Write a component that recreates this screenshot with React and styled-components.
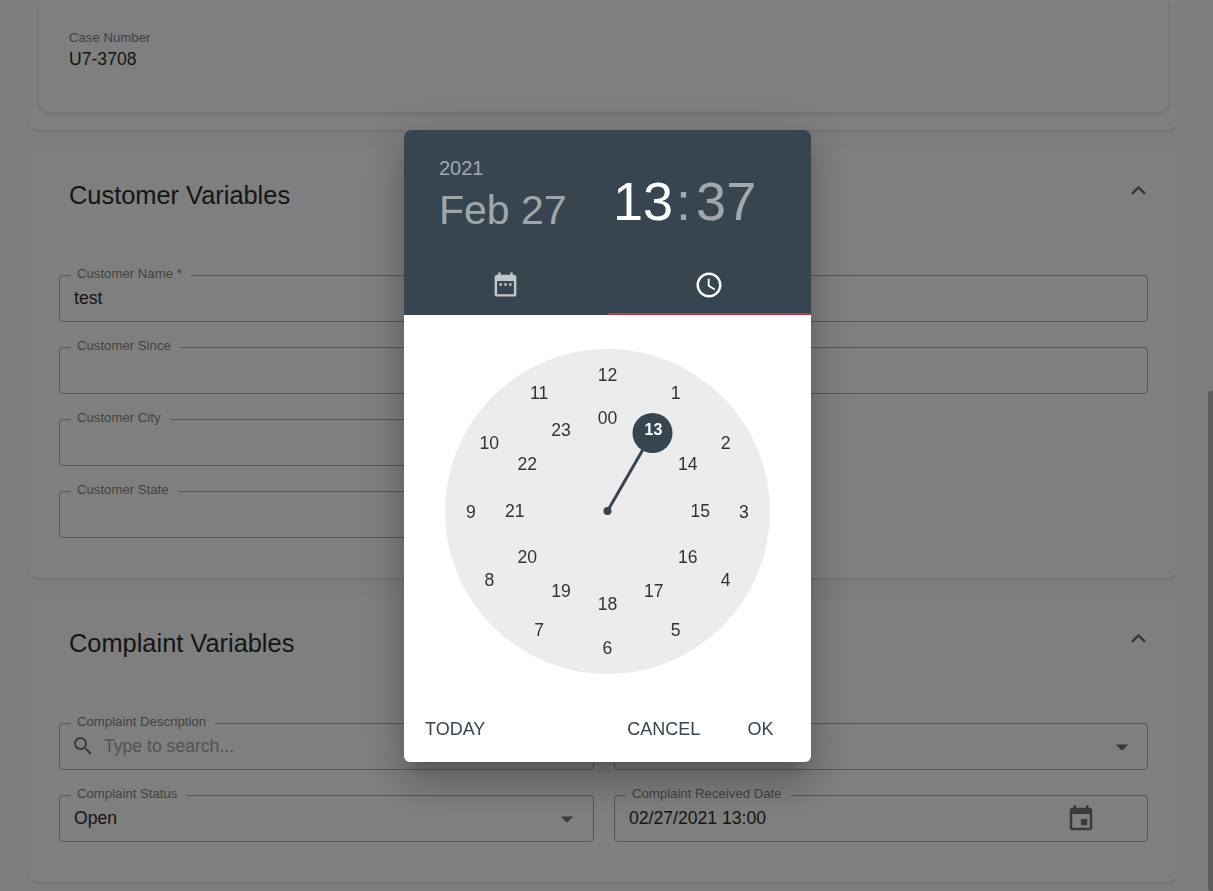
import React from 'react';
import styled, { createGlobalStyle } from 'styled-components';

const GlobalStyle = createGlobalStyle`
  html, body {
    margin: 0;
    height: 100%;
    overflow: hidden;
    background: #fafafa;
  }
  body {
    font-family: "Liberation Sans", Arial, sans-serif;
    color: #2c2c2c;
  }
`;

const ICONS = {
  chevron: 'M12 8l-6 6 1.41 1.41L12 10.83l4.59 4.58L18 14z',
  caret: 'M7 10l5 5 5-5z',
  search: 'M15.5 14h-.79l-.28-.27C15.41 12.59 16 11.11 16 9.5 16 5.91 13.09 3 9.5 3S3 5.91 3 9.5 5.91 16 9.5 16c1.61 0 3.09-.59 4.23-1.57l.27.28v.79l5 4.99L20.49 19l-4.99-5zm-6 0C7.01 14 5 11.99 5 9.5S7.01 5 9.5 5 14 7.01 14 9.5 11.99 14 9.5 14z',
  event: 'M17 12h-5v5h5v-5zM16 1v2H8V1H6v2H5c-1.11 0-1.99.9-1.99 2L3 19c0 1.1.89 2 2 2h14c1.1 0 2-.9 2-2V5c0-1.1-.9-2-2-2h-1V1h-2zm3 18H5V8h14v11z',
  dateRange: 'M9 11H7v2h2v-2zm4 0h-2v2h2v-2zm4 0h-2v2h2v-2zm2-7h-1V2h-2v2H8V2H6v2H5c-1.11 0-1.99.9-1.99 2L3 20c0 1.1.89 2 2 2h14c1.1 0 2-.9 2-2V6c0-1.1-.9-2-2-2zm0 16H5V9h14v11z',
  clock: 'M11.99 2C6.47 2 2 6.48 2 12s4.47 10 9.99 10C17.52 22 22 17.52 22 12S17.52 2 11.99 2zM12 20c-4.42 0-8-3.58-8-8s3.58-8 8-8 8 3.58 8 8-3.58 8-8 8zM12.5 7H11v6l5.25 3.15.75-1.23-4.5-2.67z',
};

const Icon = ({ name, size = 24, className }) => (
  <svg className={className} width={size} height={size} viewBox="0 0 24 24" fill="currentColor" aria-hidden="true">
    <path d={ICONS[name]} />
  </svg>
);

const OUTER = [
  ['12', 0], ['1', 30], ['2', 60], ['3', 90], ['4', 120], ['5', 150],
  ['6', 180], ['7', 210], ['8', 240], ['9', 270], ['10', 300], ['11', 330],
];
const INNER = [
  ['00', 0], ['14', 60], ['15', 90], ['16', 120], ['17', 150], ['18', 180],
  ['19', 210], ['20', 240], ['21', 270], ['22', 300], ['23', 330],
];

const Page = styled.div`
  display: flex;
  height: 891px;
  overflow: hidden;
`;

const Content = styled.main`
  flex: 1;
  display: flex;
  flex-direction: column;
  gap: 20px;
  padding: 0 31px 0 29px;
`;

const Scrollbar = styled.div`
  width: 5px;
  padding-top: 391px;
`;

const ScrollThumb = styled.div`
  height: 500px;
  background: #bdbdbd;
  border-radius: 3px 0 0 3px;
`;

const Section = styled.section`
  background: #fff;
  border-radius: 10px;
  box-shadow: 0 2px 3px -1px rgba(0, 0, 0, 0.16);
  padding: 30px 29px 40px 30px;
`;

const TopSection = styled(Section)`
  height: 130px;
  box-sizing: border-box;
  padding: 0 9px 18px 10px;
  border-radius: 0 0 10px 10px;
`;

const CaseCard = styled.div`
  height: 100%;
  box-sizing: border-box;
  padding: 30px 30px 0;
  border-radius: 0 0 10px 10px;
  box-shadow: 0 2px 5px rgba(0, 0, 0, 0.14);
`;

const CaseLabel = styled.div`
  font-size: 13.2px;
  line-height: 15px;
  color: #858585;
`;

const CaseValue = styled.div`
  font-size: 17.6px;
  line-height: 24px;
  margin-top: 2px;
`;

const SectionHeader = styled.header`
  display: flex;
  align-items: center;
  justify-content: space-between;
  height: 30px;
  margin-bottom: 65px;
  padding-left: 10px;
`;

const SectionTitle = styled.h2`
  margin: 0;
  font-size: 25.4px;
  font-weight: 400;
  line-height: 30px;
`;

const Chevron = styled(Icon)`
  color: #666;
  margin: 0 -5px 10px 0;
`;

const FieldGrid = styled.div`
  display: grid;
  grid-template-columns: 535px 534px;
  grid-auto-rows: 47px;
  gap: 25px 20px;
`;

const Field = styled.div`
  position: relative;
  display: flex;
  align-items: center;
  box-sizing: border-box;
  padding: 0 0 1px ${(p) => (p.$lead ? '11px' : '14px')};
  border: 1px solid #b0b0b0;
  border-radius: 4px;
  font-size: 17.6px;
  grid-column: ${(p) => p.$col || 'auto'};
  grid-row: ${(p) => p.$row || 'auto'};
`;

const FieldLabel = styled.span`
  position: absolute;
  top: -10px;
  left: 11px;
  padding: 0 9px 0 6px;
  background: #fff;
  font-size: 13.2px;
  line-height: 15px;
  color: #858585;
`;

const Placeholder = styled.span`
  margin-left: 9px;
  color: #a6a6a6;
`;

const SearchIcon = styled(Icon)`
  color: #757575;
`;

const TrailingIcon = styled(Icon)`
  position: absolute;
  top: 8px;
  right: ${(p) => p.$right}px;
  color: #757575;
`;

const Backdrop = styled.div`
  position: fixed;
  inset: 0;
  background: rgba(0, 0, 0, 0.5);
`;

const Dialog = styled.div`
  position: fixed;
  top: 130px;
  left: 404px;
  width: 407px;
  height: 632px;
  display: flex;
  flex-direction: column;
  background: #fff;
  border-radius: 6px;
  overflow: hidden;
  box-shadow: 0 11px 15px -7px rgba(0, 0, 0, 0.2), 0 24px 38px 3px rgba(0, 0, 0, 0.14), 0 9px 46px 8px rgba(0, 0, 0, 0.12);
`;

const Toolbar = styled.div`
  height: 185px;
  background: #36454f;
  display: flex;
  flex-direction: column;
`;

const ToolbarMain = styled.div`
  flex: 1;
  display: flex;
  padding: 26px 0 0 35px;
`;

const DateColumn = styled.div`
  width: 174px;
  color: rgba(255, 255, 255, 0.54);
`;

const Year = styled.div`
  font-size: 20px;
  line-height: 24px;
`;

const DateText = styled.div`
  font-size: 41px;
  line-height: 47px;
  margin-top: 7px;
`;

const Time = styled.div`
  display: flex;
  font-size: 54px;
  line-height: 60px;
  margin-top: 15px;
  color: rgba(255, 255, 255, 0.54);
`;

const Hours = styled.span`
  color: #fff;
`;

const Colon = styled.span`
  margin: 0 5px 0 3px;
`;

const Tabs = styled.div`
  display: flex;
  height: 53px;
`;

const Tab = styled.div`
  flex: 1;
  display: flex;
  align-items: flex-start;
  justify-content: center;
  padding-top: 8px;
  box-sizing: border-box;
  border-bottom: 2px solid ${(p) => (p.$active ? '#c4384a' : 'transparent')};
  color: ${(p) => (p.$active ? '#fff' : 'rgba(255, 255, 255, 0.7)')};
`;

const ClockArea = styled.div`
  flex: 1;
  display: flex;
  justify-content: center;
  padding-top: 34px;
`;

const ClockFace = styled.div`
  position: relative;
  width: 325px;
  height: 325px;
  border-radius: 50%;
  background: #ececec;
`;

const ClockNumber = styled.span`
  position: absolute;
  transform: translate(-50%, -50%);
  font-size: 17.6px;
  line-height: 20px;
  color: #333;
`;

const SelectedNumber = styled(ClockNumber)`
  left: 208.5px;
  top: 81px;
  color: #fff;
  font-weight: 700;
  font-size: 16px;
`;

const Hand = styled.svg`
  position: absolute;
  inset: 0;
`;

const Actions = styled.div`
  display: flex;
  align-items: center;
  height: 66px;
  padding: 0 37px 0 21px;
`;

const ActionButton = styled.button`
  border: 0;
  padding: 0;
  background: none;
  font: inherit;
  font-size: 18px;
  color: #36454f;
  margin-left: ${(p) => p.$gap || 0}px;
`;

const polar = (deg, r, cy) => {
  const a = (deg * Math.PI) / 180;
  return { left: 162.5 + r * Math.sin(a), top: cy - r * Math.cos(a) };
};

export default function App() {
  return (
    <>
      <GlobalStyle />
      <Page>
        <Content>
          <TopSection>
            <CaseCard>
              <CaseLabel>Case Number</CaseLabel>
              <CaseValue>U7-3708</CaseValue>
            </CaseCard>
          </TopSection>

          <Section>
            <SectionHeader>
              <SectionTitle>Customer Variables</SectionTitle>
              <Chevron name="chevron" size={29} />
            </SectionHeader>
            <FieldGrid>
              <Field $col={1} $row={1}><FieldLabel>Customer Name *</FieldLabel>test</Field>
              <Field $col={2} $row={1} />
              <Field $col={1} $row={2}><FieldLabel>Customer Since</FieldLabel></Field>
              <Field $col={2} $row={2} />
              <Field $col={1} $row={3}><FieldLabel>Customer City</FieldLabel></Field>
              <Field $col={1} $row={4}><FieldLabel>Customer State</FieldLabel></Field>
            </FieldGrid>
          </Section>

          <Section>
            <SectionHeader>
              <SectionTitle>Complaint Variables</SectionTitle>
              <Chevron name="chevron" size={29} />
            </SectionHeader>
            <FieldGrid>
              <Field $lead>
                <FieldLabel>Complaint Description</FieldLabel>
                <SearchIcon name="search" />
                <Placeholder>Type to search...</Placeholder>
              </Field>
              <Field>
                <TrailingIcon name="caret" size={30} $right={10} />
              </Field>
              <Field>
                <FieldLabel>Complaint Status</FieldLabel>
                Open
                <TrailingIcon name="caret" size={30} $right={11} />
              </Field>
              <Field>
                <FieldLabel>Complaint Received Date</FieldLabel>
                02/27/2021 13:00
                <TrailingIcon name="event" size={30} $right={51} />
              </Field>
            </FieldGrid>
          </Section>
        </Content>
        <Scrollbar><ScrollThumb /></Scrollbar>
      </Page>

      <Backdrop />

      <Dialog>
        <Toolbar>
          <ToolbarMain>
            <DateColumn>
              <Year>2021</Year>
              <DateText>Feb 27</DateText>
            </DateColumn>
            <Time>
              <Hours>13</Hours>
              <Colon>:</Colon>
              <span>37</span>
            </Time>
          </ToolbarMain>
          <Tabs>
            <Tab><Icon name="dateRange" size={29} /></Tab>
            <Tab $active><Icon name="clock" size={30} /></Tab>
          </Tabs>
        </Toolbar>

        <ClockArea>
          <ClockFace>
            {OUTER.map(([label, deg]) => (
              <ClockNumber key={label} style={polar(deg, 136.5, 162.5)}>{label}</ClockNumber>
            ))}
            {INNER.map(([label, deg]) => (
              <ClockNumber key={label} style={polar(deg, 92.75, 161.75)}>{label}</ClockNumber>
            ))}
            <Hand width="325" height="325" viewBox="0 0 325 325">
              <line x1="162.5" y1="162" x2="207.5" y2="84" stroke="#36454f" strokeWidth="3" />
              <circle cx="162.5" cy="162" r="4" fill="#36454f" />
              <circle cx="207.5" cy="84" r="20" fill="#36454f" />
            </Hand>
            <SelectedNumber>13</SelectedNumber>
          </ClockFace>
        </ClockArea>

        <Actions>
          <ActionButton>TODAY</ActionButton>
          <ActionButton $gap={142}>CANCEL</ActionButton>
          <ActionButton $gap={47}>OK</ActionButton>
        </Actions>
      </Dialog>
    </>
  );
}
